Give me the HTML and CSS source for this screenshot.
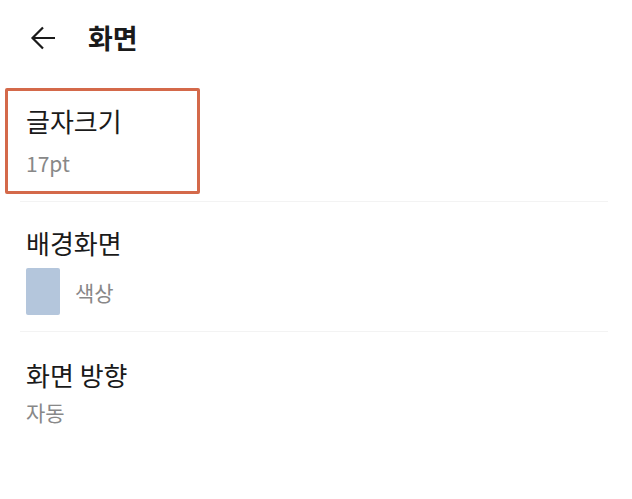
FILE: index.html
```html
<!DOCTYPE html>
<html>
<head>
    <title>화면</title>
    <link rel="stylesheet" href="styles.css">
</head>
<body>
    <div class="header">
        <svg class="back" width="28" height="28" viewBox="0 0 28 28">
            <path d="M26 14H4M14 3.5L3.5 14L14 24.5" fill="none" stroke="#1a1a1a" stroke-width="2.2"/>
        </svg>
        <div class="title">화면</div>
    </div>
    <div class="list">
        <div class="item focused">
            <div class="item-title">글자크기</div>
            <div class="item-sub">17pt</div>
        </div>
        <div class="item bg">
            <div class="item-title">배경화면</div>
            <div class="swatch-row">
                <div class="swatch"></div>
                <div class="item-sub">색상</div>
            </div>
        </div>
        <div class="item orient">
            <div class="item-title">화면 방향</div>
            <div class="item-sub">자동</div>
        </div>
    </div>
</body>
</html>
```

FILE: styles.css
```css
body {
  margin: 0;
  background: #fff;
  font-family: "Noto Sans CJK KR", "Noto Sans", sans-serif;
  color: #1a1a1a;
}
.header {
  height: 76px;
  display: flex;
  align-items: center;
  padding-left: 29px;
}
.back {
  margin-right: 31px;
}
.title {
  font-size: 27px;
  font-weight: bold;
  line-height: 36px;
}
.list {
  padding: 0 24px 0 20px;
}
.item {
  border-top: 1px solid #f3f3f3;
  padding-left: 6px;
}
.item-title {
  font-size: 26px;
  line-height: 36px;
}
.item-sub {
  font-size: 21px;
  line-height: 28px;
  color: #888;
}
.focused {
  border: 3px solid #d4694a;
  border-radius: 2px;
  width: 171px;
  margin: 12px 0 7px -15px;
  padding: 12px 0 14px 18px;
}
.focused .item-sub {
  margin-top: 10px;
}
.bg {
  padding-top: 23px;
  padding-bottom: 16px;
}
.swatch-row {
  display: flex;
  align-items: center;
  margin-top: 7px;
}
.swatch {
  width: 34px;
  height: 47px;
  background: #b4c6dc;
  border-radius: 2px;
  margin-right: 15px;
}
.orient {
  padding-top: 25px;
}
.orient .item-sub {
  margin-top: 5px;
}
```
